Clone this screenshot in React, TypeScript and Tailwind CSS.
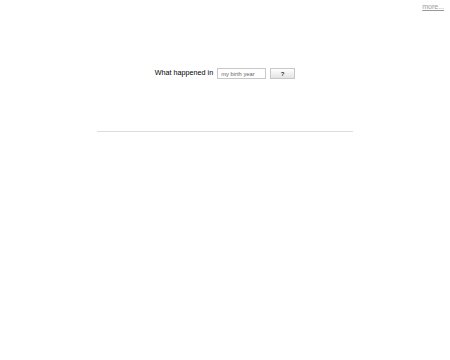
import React, { useState } from 'react';

export default function App() {
  const [year, setYear] = useState('');

  return (
    <div className="relative w-[450px] h-[360px] bg-white" style={{ fontFamily: '"Liberation Sans", Arial, sans-serif' }}>
      <a href="#" className="absolute right-[6px] top-[2px] text-[7px] text-[#999] underline">
        more...
      </a>

      <div className="flex flex-col items-center pt-[68px]">
        <div className="flex items-center">
          <span className="text-[7.2px] text-black mr-[4px] whitespace-nowrap">What happened in</span>
          <input
            value={year}
            onChange={(e) => setYear(e.target.value)}
            placeholder="my birth year"
            className="w-[49px] h-[11px] border border-[#c8c8c8] px-[3px] text-[5.8px] text-[#444] placeholder:text-[#666] outline-none"
          />
          <button className="ml-[4px] w-[25px] h-[11px] border border-[#c8c8c8] bg-gradient-to-b from-white to-[#e4e4e4] text-[6px] font-bold text-[#333] leading-none">
            ?
          </button>
        </div>
        <div className="mt-[52px] w-[256px] border-t border-[#ddd]" />
      </div>
    </div>
  );
}
